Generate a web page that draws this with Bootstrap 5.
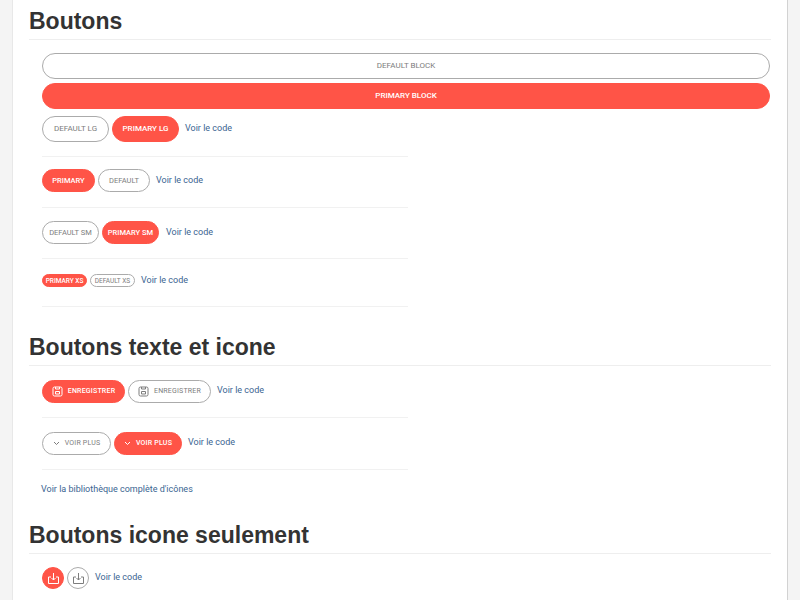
<!DOCTYPE html>
<html lang="fr">
<head>
    <meta charset="UTF-8">
    <meta name="viewport" content="width=device-width, initial-scale=1.0">
    <title>Boutons</title>
    <link href="https://cdn.jsdelivr.net/npm/bootstrap@5.3.0/dist/css/bootstrap.min.css" rel="stylesheet">
    <style>
        body {
            background-color: #f4f4f4;
            font-family: "Roboto", "Liberation Sans", sans-serif;
            overflow: hidden;
        }
        .sheet {
            width: 776px;
            height: 600px;
            margin-left: 12px;
            padding: 0 16px;
            background-color: #fff;
            border-right: 1px solid #d2d2d2;
            border-left: 1px solid #e8e8e8;
            overflow: hidden;
        }
        .sec-title {
            margin: 0 0 13px;
            height: 40px;
            padding-top: 7px;
            font-family: "Liberation Sans", sans-serif;
            font-size: 23px;
            line-height: 28px;
            font-weight: 700;
            color: #333;
            border-bottom: 1px solid #eee;
        }
        .sec-body {
            margin-left: 13px;
        }
        .btn-row {
            display: flex;
            align-items: center;
            gap: 3px;
        }
        .pill {
            display: inline-flex;
            align-items: center;
            justify-content: center;
            flex: none;
            padding: 0;
            border-radius: 100px;
            font-family: "Roboto", sans-serif;
            font-weight: 500;
            font-size: 8px;
            line-height: 1;
            text-transform: uppercase;
        }
        .pill-red, .pill-red:hover {
            background-color: #ff5447;
            border: 1px solid #ff5447;
            color: #fff;
        }
        .pill-line, .pill-line:hover {
            background-color: #fff;
            border: 1px solid #ababab;
            color: #7d7d7d;
            font-weight: 400;
        }
        .pill-block { display: flex; width: 728px; height: 26px; margin-bottom: 4px; }
        .size-lg { height: 26px; width: 67px; }
        .size-md { height: 23px; width: 52px; font-size: 7.5px; }
        .size-sm { height: 23px; width: 57px; font-size: 7.5px; }
        .size-xs { height: 13px; width: 45px; font-size: 6.5px; }
        .size-ico { height: 23px; font-size: 7px; letter-spacing: .2px; gap: 5px; }
        .pill-round { width: 22px; height: 22px; }
        .code-link {
            margin-left: 3px;
            font-family: "Roboto", sans-serif;
            font-size: 9px;
            font-weight: 400;
            color: #3a6491;
            text-decoration: none;
        }
        .btn-line {
            width: 366px;
            border-bottom: 1px solid #f1f1f1;
        }
    </style>
</head>
<body>
    <div class="sheet">
        <h2 class="sec-title">Boutons</h2>
        <div class="sec-body">
            <a class="btn pill pill-line pill-block" href="#">Default block</a>
            <a class="btn pill pill-red pill-block" href="#">Primary block</a>

            <div class="btn-row btn-line" style="margin-top:7px;padding-bottom:14px">
                <a class="btn pill pill-line size-lg" href="#">Default lg</a>
                <a class="btn pill pill-red size-lg" href="#">Primary lg</a>
                <a class="code-link" href="#">Voir le code</a>
            </div>
            <div class="btn-row btn-line" style="padding-top:12px;padding-bottom:15px">
                <a class="btn pill pill-red size-md" style="width:53px" href="#">Primary</a>
                <a class="btn pill pill-line size-md" href="#">Default</a>
                <a class="code-link" href="#">Voir le code</a>
            </div>
            <div class="btn-row btn-line" style="padding-top:13px;padding-bottom:14px">
                <a class="btn pill pill-line size-sm" href="#">Default sm</a>
                <a class="btn pill pill-red size-sm" href="#">Primary sm</a>
                <a class="code-link" style="margin-left:4px" href="#">Voir le code</a>
            </div>
            <div class="btn-row btn-line" style="padding-top:15px;padding-bottom:18px">
                <a class="btn pill pill-red size-xs" href="#">Primary xs</a>
                <a class="btn pill pill-line size-xs" href="#">Default xs</a>
                <a class="code-link" href="#">Voir le code</a>
            </div>
        </div>

        <h2 class="sec-title" style="margin-top:19px">Boutons texte et icone</h2>
        <div class="sec-body">
            <div class="btn-row btn-line" style="padding-bottom:14px;margin-top:14px">
                <a class="btn pill pill-red size-ico" style="width:83px" href="#">
                    <svg width="11" height="11" viewBox="0 0 11 11" fill="none" stroke="currentColor" stroke-width="1"><rect x="1" y="1" width="9" height="9" rx="1.5"/><path d="M3.500 1v2h4V1M3.500 5.500h4v2.500h-4z"/></svg>
                    Enregistrer
                </a>
                <a class="btn pill pill-line size-ico" style="width:83px" href="#">
                    <svg width="11" height="11" viewBox="0 0 11 11" fill="none" stroke="currentColor" stroke-width="1"><rect x="1" y="1" width="9" height="9" rx="1.5"/><path d="M3.500 1v2h4V1M3.500 5.500h4v2.500h-4z"/></svg>
                    Enregistrer
                </a>
                <a class="code-link" href="#">Voir le code</a>
            </div>
            <div class="btn-row btn-line" style="padding-top:14px;padding-bottom:14px">
                <a class="btn pill pill-line size-ico" style="width:69px" href="#">
                    <svg width="7" height="5" viewBox="0 0 7 5" fill="none" stroke="currentColor" stroke-width="1"><path d="M1 1l2.500 2.500L6 1"/></svg>
                    Voir plus
                </a>
                <a class="btn pill pill-red size-ico" style="width:68px" href="#">
                    <svg width="7" height="5" viewBox="0 0 7 5" fill="none" stroke="currentColor" stroke-width="1"><path d="M1 1l2.500 2.500L6 1"/></svg>
                    Voir plus
                </a>
                <a class="code-link" href="#">Voir le code</a>
            </div>
            <a class="code-link d-block" style="margin:13px 0 0 -1px" href="#">Voir la bibliothèque complète d'icônes</a>
        </div>

        <h2 class="sec-title" style="margin-top:18px">Boutons icone seulement</h2>
        <div class="sec-body">
            <div class="btn-row">
                <a class="btn pill pill-red pill-round" href="#" aria-label="Télécharger">
                    <svg width="13" height="13" viewBox="0 0 13 13" fill="none" stroke="currentColor" stroke-width="1"><path d="M4 5H1.500v6.500h10V5H9M6.500 1v7M4.500 6l2 2 2-2"/></svg>
                </a>
                <a class="btn pill pill-line pill-round" href="#" aria-label="Télécharger">
                    <svg width="13" height="13" viewBox="0 0 13 13" fill="none" stroke="currentColor" stroke-width="1"><path d="M4 5H1.500v6.500h10V5H9M6.500 1v7M4.500 6l2 2 2-2"/></svg>
                </a>
                <a class="code-link" href="#">Voir le code</a>
            </div>
        </div>
    </div>
    <script src="https://cdn.jsdelivr.net/npm/bootstrap@5.3.0/dist/js/bootstrap.bundle.min.js"></script>
</body>
</html>
